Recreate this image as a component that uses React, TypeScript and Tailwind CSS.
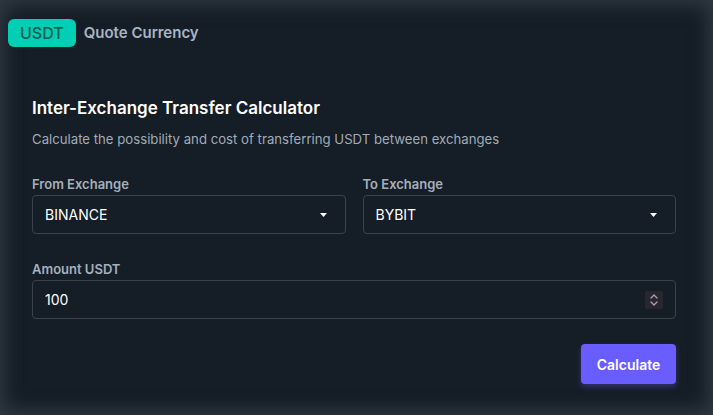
import React, { useState } from "react";

const EXCHANGES = ["BINANCE", "BYBIT", "OKX", "KUCOIN", "GATE"];

const Caret = () => (
  <svg width="7" height="4" viewBox="0 0 7 4" className="shrink-0">
    <path d="M0 0h7L3.5 4z" fill="#ffffff" />
  </svg>
);

const Spinner = () => (
  <div className="flex h-[18px] w-[18px] flex-col items-center justify-center rounded-[2px] bg-[#29262f]">
    <svg width="10" height="14" viewBox="0 0 10 14">
      <path d="M2 5l3-3 3 3M2 9l3 3 3-3" fill="none" stroke="#a49fae" strokeWidth="1.4" strokeLinecap="round" strokeLinejoin="round" />
    </svg>
  </div>
);

const ExchangeSelect = ({ label, value }: { label: string; value: string }) => (
  <div className="flex flex-col">
    <span className="mb-[2px] text-[13px] font-semibold leading-[18px] text-[#a4b0bc]">{label}</span>
    <div className="flex h-[39px] items-center justify-between rounded-[4px] border border-[#3a434d] pl-[12px] pr-[18px]">
      <span className="text-[14px] text-white">{value}</span>
      <Caret />
    </div>
  </div>
);

export default function App() {
  const [amount] = useState("100");

  return (
    <div
      className="min-h-[415px] w-full bg-[#151d26] shadow-[inset_0_0_18px_5px_rgba(50,59,68,0.95)]"
      style={{ fontFamily: "Inter, 'Noto Sans', sans-serif" }}
    >
      {/* Currency tab */}
      <div className="flex items-center gap-[8px] pl-[8px] pt-[19px]">
        <span className="flex h-[28px] items-center rounded-[6px] bg-[#00ceb5] px-[12px] text-[16px] font-medium text-[#0c5a50]">
          USDT
        </span>
        <span className="text-[15px] font-semibold text-[#a7b5c4]">Quote Currency</span>
      </div>

      {/* Calculator */}
      <div className="w-[676px] pl-[32px] pt-[49px]">
        <h2 className="text-[17px] font-semibold leading-[24px] text-white">Inter-Exchange Transfer Calculator</h2>
        <p className="mt-[9px] text-[13.2px] leading-[20px] text-[#a0acb8]">
          Calculate the possibility and cost of transferring USDT between exchanges
        </p>

        <div className="mt-[26px] grid grid-cols-2 gap-[17px]">
          <ExchangeSelect label="From Exchange" value={EXCHANGES[0]} />
          <ExchangeSelect label="To Exchange" value={EXCHANGES[1]} />
        </div>

        <div className="mt-[26px] flex flex-col">
          <span className="mb-[2px] text-[13px] font-semibold leading-[18px] text-[#a4b0bc]">Amount USDT</span>
          <div className="flex h-[39px] items-center justify-between rounded-[4px] border border-[#3a434d] pl-[12px] pr-[12px]">
            <span className="text-[14px] text-white">{amount}</span>
            <Spinner />
          </div>
        </div>

        <div className="mt-[25px] flex justify-end">
          <button className="h-[40px] w-[95px] rounded-[4px] bg-[#6a5dff] text-[14px] font-semibold text-white shadow-[0_3px_6px_rgba(106,93,255,0.35)]">
            Calculate
          </button>
        </div>
      </div>
    </div>
  );
}
